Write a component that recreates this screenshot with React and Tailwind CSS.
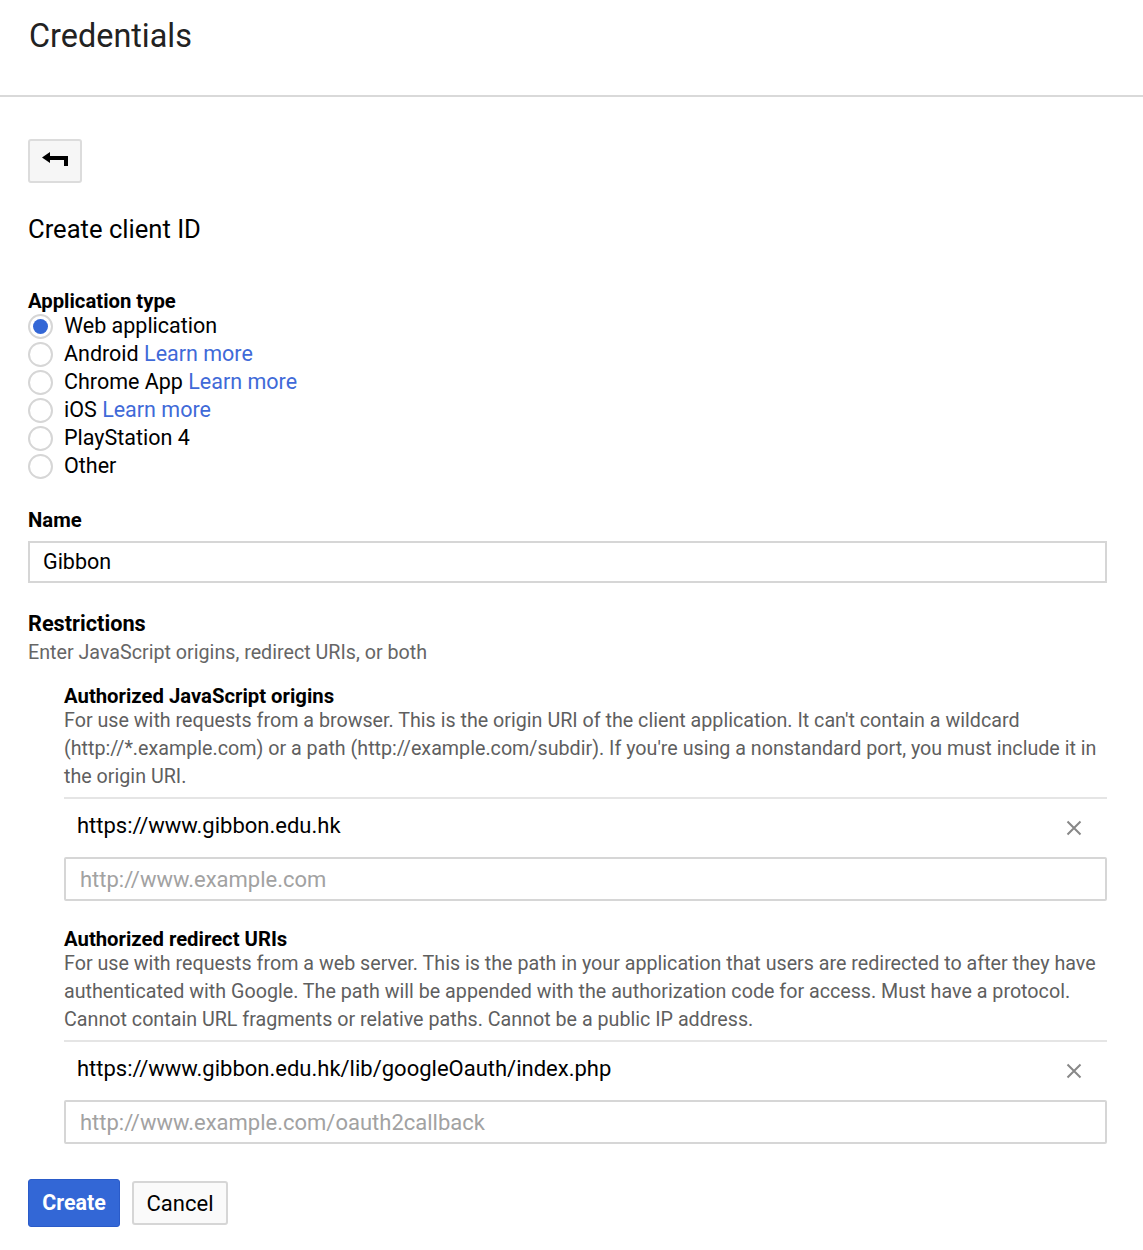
import React from "react";

const font = { fontFamily: "Roboto, 'Liberation Sans', sans-serif" };

const types = [
  { label: "Web application", checked: true },
  { label: "Android", learn: true },
  { label: "Chrome App", learn: true },
  { label: "iOS", learn: true },
  { label: "PlayStation 4" },
  { label: "Other" },
];

function Radio({ checked }) {
  return (
    <span className="w-[25px] h-[25px] rounded-full border-2 border-[#d6d6d6] bg-white flex items-center justify-center shrink-0">
      {checked && <span className="w-[15px] h-[15px] rounded-full bg-[#3367d6]" />}
    </span>
  );
}

function XIcon() {
  return (
    <svg width="16" height="16" viewBox="0 0 16 16" className="text-[#888]">
      <path d="M1.5 1.5 L14.5 14.5 M14.5 1.5 L1.5 14.5" stroke="currentColor" strokeWidth="2" fill="none" />
    </svg>
  );
}

function UriSection({ title, desc, value, placeholder }) {
  return (
    <div>
      <div className="text-[20.3px] font-bold leading-[22px] text-black">{title}</div>
      <p className="text-[19.7px] leading-[28px] text-[#5f5f5f]">{desc}</p>
      <div className="mt-[6px] border-t-2 border-[#e5e5e5] flex items-center justify-between pl-[13px] pr-[25px] h-[60px]">
        <span className="text-[22px] text-black mb-[5px]">{value}</span>
        <XIcon />
      </div>
      <div className="h-[44px] border-2 border-[#d6d6d6] rounded-[2px] flex items-center px-[14px] text-[22px] text-[#a2a2a2]">
        {placeholder}
      </div>
    </div>
  );
}

export default function App() {
  return (
    <div className="bg-white min-h-[1250px] text-[#212121]" style={font}>
      <div className="h-[97px] border-b-2 border-[#d9d9d9] px-[29px] pt-[15px]">
        <h1 className="text-[32.4px] leading-[42px] text-[#222]">Credentials</h1>
      </div>

      <div className="pl-[28px] pr-[36px]">
        <button className="mt-[42px] w-[54px] h-[44px] border-2 border-[#dcdcdc] rounded-[3px] bg-[#f6f6f6] flex items-center justify-center">
          <svg width="26" height="20" viewBox="0 0 26 20">
            <path d="M0 6.5 L8 1 L8 5 L26 5 L26 15 L22 15 L22 9 L8 9 L8 12 Z" fill="#000" />
          </svg>
        </button>

        <h2 className="mt-[29px] text-[25.6px] leading-[34px] text-black">Create client ID</h2>

        <div className="mt-[43px] text-[20.3px] font-bold leading-[24px] text-black">Application type</div>
        <div className="flex flex-col -mt-[1px]">
          {types.map((t) => (
            <label key={t.label} className="flex items-center gap-[11px] h-[28px] text-[21.5px] text-black">
              <Radio checked={t.checked} />
              <span>
                {t.label}
                {t.learn && <span className="text-[#3f6ad8]"> Learn more</span>}
              </span>
            </label>
          ))}
        </div>

        <div className="mt-[28px] text-[20.3px] font-bold leading-[24px] text-black">Name</div>
        <div className="mt-[9px] h-[42px] border-2 border-[#d6d6d6] flex items-center px-[13px] text-[21.5px] text-black">
          Gibbon
        </div>

        <div className="mt-[27px] text-[21.7px] font-bold leading-[28px] text-black">Restrictions</div>
        <div className="mt-[1px] text-[19.7px] leading-[28px] text-[#666]">Enter JavaScript origins, redirect URIs, or both</div>

        <div className="pl-[36px] mt-[18px] flex flex-col gap-[27px]">
          <UriSection
            title="Authorized JavaScript origins"
            desc="For use with requests from a browser. This is the origin URI of the client application. It can't contain a wildcard (http://*.example.com) or a path (http://example.com/subdir). If you're using a nonstandard port, you must include it in the origin URI."
            value="https://www.gibbon.edu.hk"
            placeholder="http://www.example.com"
          />
          <UriSection
            title="Authorized redirect URIs"
            desc="For use with requests from a web server. This is the path in your application that users are redirected to after they have authenticated with Google. The path will be appended with the authorization code for access. Must have a protocol. Cannot contain URL fragments or relative paths. Cannot be a public IP address."
            value="https://www.gibbon.edu.hk/lib/googleOauth/index.php"
            placeholder="http://www.example.com/oauth2callback"
          />
        </div>

        <div className="mt-[35px] flex items-center gap-[12px]">
          <button className="w-[92px] h-[48px] rounded-[3px] bg-[#3367d6] border border-[#2a5bc9] text-white text-[21.4px] font-bold">
            Create
          </button>
          <button className="w-[96px] h-[44px] rounded-[3px] bg-[#fafafa] border-2 border-[#d6d6d6] text-black text-[22px]">
            Cancel
          </button>
        </div>
      </div>
    </div>
  );
}
